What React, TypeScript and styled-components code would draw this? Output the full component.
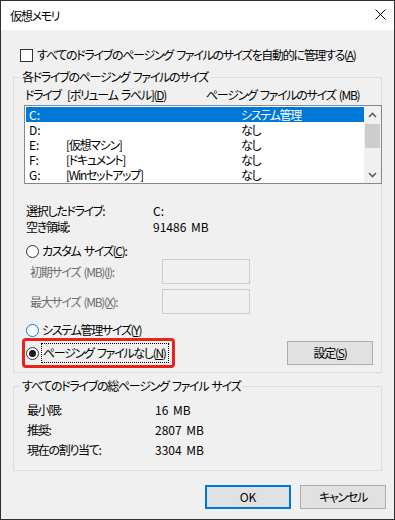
import { Fragment } from 'react'
import styled, { createGlobalStyle } from 'styled-components'

const GlobalStyle = createGlobalStyle`
  html, body {
    margin: 0;
    padding: 0;
    background: #ffffff;
  }
  body {
    font-family: 'Noto Sans CJK JP', 'Noto Sans', sans-serif;
    font-size: 12px;
    color: #000;
  }
`

const Window = styled.div`
  width: 395px;
  height: 520px;
  box-sizing: border-box;
  border: 1px solid #2f2f2f;
  background: #f0f0f0;
  display: flex;
  flex-direction: column;
  font-feature-settings: 'palt';
  font-size: 12px;
  letter-spacing: -1.3px;
  word-spacing: 2px;
  white-space: nowrap;
`

// numbers and latin values keep their natural spacing
const Num = styled.span`
  letter-spacing: 0;
`

// ─── Title bar ───────────────────────────────────────────────────────────────

const TitleBar = styled.div`
  height: 29px;
  background: #ffffff;
  display: flex;
  align-items: center;
  justify-content: space-between;
  padding: 0 8px 0 9px;
  line-height: 16px;
`

const CloseGlyph = styled.svg`
  width: 11px;
  height: 11px;
  display: block;
  margin-top: -2px;
`

// ─── Body ────────────────────────────────────────────────────────────────────

const Body = styled.div`
  padding: 0 12px;
  display: flex;
  flex-direction: column;
`

const CheckRow = styled.label`
  display: flex;
  align-items: center;
  gap: 4px;
  height: 16px;
  line-height: 16px;
  margin: 17px 0 0 7px;
`

const CheckBox = styled.span`
  width: 13px;
  height: 13px;
  box-sizing: border-box;
  border: 1px solid #333;
  background: #fff;
`

const Group = styled.fieldset<{ gap: number }>`
  margin: ${p => p.gap}px 0 0;
  padding: 0;
  border: 1px solid #dcdcdc;
  min-width: 0;
`

const Legend = styled.legend`
  margin-left: 6px;
  padding: 0 2px;
  line-height: 16px;
`

const GroupInner = styled.div<{ pad: string }>`
  padding: ${p => p.pad};
`

// ─── Drive list ──────────────────────────────────────────────────────────────

const HeaderRow = styled.div`
  display: grid;
  grid-template-columns: 42px 139px auto;
  padding-left: 1px;
  line-height: 16px;
`

const ListBox = styled.div`
  margin-top: 2px;
  width: 358px;
  height: 79px;
  box-sizing: border-box;
  border: 1px solid #828790;
  background: #fff;
  display: flex;
`

const Rows = styled.div`
  flex: 1;
  padding: 1px 0 0 1px;
`

const Row = styled.div<{ selected?: boolean }>`
  height: 15px;
  line-height: 15px;
  display: grid;
  grid-template-columns: 37px 175px 1fr;
  padding-left: 3px;
  background: ${p => p.selected ? '#0078d7' : 'transparent'};
  color: ${p => p.selected ? '#ffffff' : '#000000'};
`

const ScrollBar = styled.div`
  width: 17px;
  background: #f0f0f0;
  display: flex;
  flex-direction: column;
`

const ScrollArrow = styled.div`
  height: 17px;
  display: flex;
  align-items: center;
  justify-content: center;
`

const Thumb = styled.div`
  margin: 1px 1px 0;
  height: 24px;
  background: #cdcdcd;
`

const ScrollSpacer = styled.div`
  flex: 1;
`

// ─── Info / radios ───────────────────────────────────────────────────────────

const InfoGrid = styled.div<{ col: number; pad: number; rowH: number; top: number }>`
  display: grid;
  grid-template-columns: ${p => p.col}px auto;
  padding-left: ${p => p.pad}px;
  margin-top: ${p => p.top}px;
  line-height: ${p => p.rowH}px;
`

const RadioRow = styled.div<{ top: number }>`
  display: flex;
  align-items: center;
  gap: 3px;
  height: 16px;
  line-height: 16px;
  margin-top: ${p => p.top}px;
  padding-left: 2px;
`

const Radio = styled.span<{ checked?: boolean; hot?: boolean }>`
  width: 13px;
  height: 13px;
  box-sizing: border-box;
  border-radius: 50%;
  border: 1px solid ${p => p.hot ? '#0078d7' : '#333333'};
  background: #fff;
  display: flex;
  align-items: center;
  justify-content: center;
  flex: none;

  &::after {
    content: '';
    display: ${p => p.checked ? 'block' : 'none'};
    width: 7px;
    height: 7px;
    border-radius: 50%;
    background: #1a1a1a;
  }
`

const SizeRow = styled.div<{ top: number }>`
  display: grid;
  grid-template-columns: 132px 88px;
  align-items: center;
  padding-left: 6px;
  margin-top: ${p => p.top}px;
  color: #6d6d6d;
  line-height: 16px;
`

const SizeInput = styled.div`
  height: 25px;
  box-sizing: border-box;
  border: 1px solid #cccccc;
  background: #f0f0f0;
`

const BottomRow = styled.div`
  display: flex;
  align-items: center;
  justify-content: space-between;
  padding-right: 8px;
`

const Highlight = styled.div`
  display: flex;
  align-items: center;
  gap: 2px;
  height: 30px;
  box-sizing: border-box;
  border: 3px solid #e8231b;
  border-radius: 4px;
  margin-left: -2px;
  padding: 0 3px 0 1px;
`

const FocusText = styled.span`
  border: 1px dotted #000;
  line-height: 18px;
  padding: 0 2px 0 1px;
`

const Button = styled.div<{ primary?: boolean }>`
  width: 86px;
  height: 24px;
  box-sizing: border-box;
  background: #e1e1e1;
  border: ${p => p.primary ? '2px solid #0078d7' : '1px solid #adadad'};
  display: flex;
  align-items: center;
  justify-content: center;
  line-height: 16px;
`

const Footer = styled.div`
  display: flex;
  justify-content: flex-end;
  gap: 9px;
  padding: 14px 8px 0 0;
`

const Chevron = ({ up }: { up?: boolean }) => (
  <svg width="9" height="6" viewBox="0 0 9 6">
    <path
      d={up ? 'M1 5 L4.5 1.5 L8 5' : 'M1 1 L4.5 4.5 L8 1'}
      fill="none"
      stroke="#606060"
      strokeWidth="1.6"
    />
  </svg>
)

const drives = [
  { d: 'C:', label: '', size: 'システム管理', selected: true },
  { d: 'D:', label: '', size: 'なし' },
  { d: 'E:', label: '[仮想マシン]', size: 'なし' },
  { d: 'F:', label: '[ドキュメント]', size: 'なし' },
  { d: 'G:', label: '[Winセットアップ]', size: 'なし' },
]

const totals = [
  ['最小限:', '16 MB'],
  ['推奨:', '2807 MB'],
  ['現在の割り当て:', '3304 MB'],
]

export default function App() {
  return (
    <>
      <GlobalStyle />
      <Window>
        <TitleBar>
          <span>仮想メモリ</span>
          <CloseGlyph viewBox="0 0 11 11">
            <path d="M0.5 0.5 L10.5 10.5 M10.5 0.5 L0.5 10.5" stroke="#000" strokeWidth="1" />
          </CloseGlyph>
        </TitleBar>

        <Body>
          <CheckRow>
            <CheckBox />
            <span>すべてのドライブのページング ファイルのサイズを自動的に管理する(<u>A</u>)</span>
          </CheckRow>

          <Group gap={6}>
            <Legend>各ドライブのページング ファイルのサイズ</Legend>
            <GroupInner pad="2px 0 4px 10px">
              <HeaderRow>
                <span>ドライブ</span>
                <span>[ボリューム ラベル](<u>D</u>)</span>
                <span>ページング ファイルのサイズ (MB)</span>
              </HeaderRow>

              <ListBox>
                <Rows>
                  {drives.map(r => (
                    <Row key={r.d} selected={r.selected}>
                      <Num>{r.d}</Num>
                      <span>{r.label}</span>
                      <span>{r.size}</span>
                    </Row>
                  ))}
                </Rows>
                <ScrollBar>
                  <ScrollArrow><Chevron up /></ScrollArrow>
                  <Thumb />
                  <ScrollSpacer />
                  <ScrollArrow><Chevron /></ScrollArrow>
                </ScrollBar>
              </ListBox>

              <InfoGrid col={127} pad={2} rowH={16} top={19}>
                <span>選択したドライブ:</span>
                <Num>C:</Num>
                <span>空き領域:</span>
                <Num>91486 MB</Num>
              </InfoGrid>

              <RadioRow top={8}>
                <Radio />
                <span>カスタム サイズ(<u>C</u>):</span>
              </RadioRow>

              <SizeRow top={0}>
                <span>初期サイズ (MB)(<u>I</u>):</span>
                <SizeInput />
              </SizeRow>
              <SizeRow top={5}>
                <span>最大サイズ (MB)(<u>X</u>):</span>
                <SizeInput />
              </SizeRow>

              <RadioRow top={8}>
                <Radio hot />
                <span>システム管理サイズ(<u>Y</u>)</span>
              </RadioRow>

              <BottomRow>
                <Highlight>
                  <Radio checked />
                  <FocusText>ページング ファイルなし(<u>N</u>)</FocusText>
                </Highlight>
                <Button>設定(<u>S</u>)</Button>
              </BottomRow>
            </GroupInner>
          </Group>

          <Group gap={5}>
            <Legend>すべてのドライブの総ページング ファイル サイズ</Legend>
            <GroupInner pad="6px 0 10px 13px">
              <InfoGrid col={128} pad={0} rowH={20} top={0}>
                {totals.map(([k, v]) => (
                  <Fragment key={k}>
                    <span>{k}</span>
                    <Num>{v}</Num>
                  </Fragment>
                ))}
              </InfoGrid>
            </GroupInner>
          </Group>
        </Body>

        <Footer>
          <Button primary><Num>OK</Num></Button>
          <Button>キャンセル</Button>
        </Footer>
      </Window>
    </>
  )
}
